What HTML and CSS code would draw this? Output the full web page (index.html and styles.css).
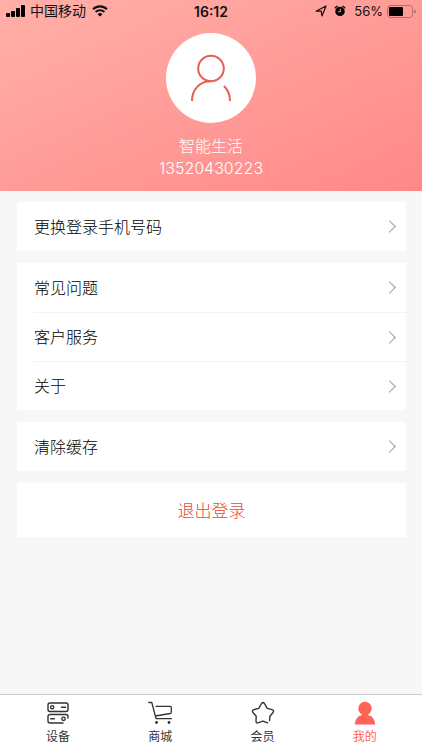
FILE: index.html
```html
<!DOCTYPE html>
<html lang="zh-CN">
<head>
<meta charset="utf-8">
<meta name="viewport" content="width=device-width, initial-scale=1">
<title>我的</title>
<link rel="stylesheet" href="styles.css">
</head>
<body>
<div class="app">
  <header class="hero">
    <div class="status">
      <div class="status-side">
        <svg class="signal" width="20" height="12" viewBox="0 0 20 12" aria-hidden="true"><rect x="0" y="8" width="4" height="4" rx="1"/><rect x="5" y="6" width="4" height="6" rx="1"/><rect x="10" y="3" width="4" height="9" rx="1"/><rect x="15" y="0" width="4" height="12" rx="1"/></svg>
        <span class="carrier">中国移动</span>
        <svg class="wifi" width="16" height="12" viewBox="0 0 16 12" aria-hidden="true"><path d="M1 4.2a10 10 0 0 1 14 0M3.6 7a6.3 6.3 0 0 1 8.8 0" fill="none" stroke="#111" stroke-width="2.1"/><path d="M8 11.6 5.6 9.2a3.4 3.4 0 0 1 4.8 0z"/></svg>
      </div>
      <time class="clock">16:12</time>
      <div class="status-side status-end">
        <svg width="12" height="12" viewBox="0 0 12 12" aria-hidden="true"><path d="M1 6.2 11 1 7 11 6.2 6.2z" fill="none" stroke="#111" stroke-width="1.2" stroke-linejoin="round"/></svg>
        <svg class="alarm" width="12" height="12" viewBox="0 0 12 12" aria-hidden="true"><circle cx="6" cy="6.4" r="4.7"/><path d="M1.300 2.800 3 1.300M10.700 2.800 9 1.300" stroke="#111" stroke-width="1.500" stroke-linecap="round"/><path d="M6.3 3.8v3H4" fill="none" stroke="#ffa19c" stroke-width="1"/></svg>
        <span class="percent">56%</span>
        <svg width="29" height="13" viewBox="0 0 29 13" aria-hidden="true"><rect x=".5" y=".5" width="25" height="12" rx="3" fill="none" stroke="#b06c69"/><rect x="2" y="2" width="14" height="9" rx="1"/><path d="M27 4.5q2 .6 2 2t-2 2z" fill="#b06c69"/></svg>
      </div>
    </div>
    <div class="avatar">
      <svg width="42" height="48" viewBox="0 0 42 48" fill="none" stroke="#e55f54" stroke-width="2" aria-hidden="true"><circle cx="21" cy="14.500" r="12.8"/><path d="M2 47C2 35.500 9.500 27.300 21 27.300M34 32C38 36 40 41 40 47"/></svg>
    </div>
    <h1 class="name">智能生活</h1>
    <p class="phone">13520430223</p>
  </header>

  <main class="content">
    <nav class="card"><a class="row" href="#phone"><span class="label">更换登录手机号码</span><span class="chevron"></span></a></nav>
    <nav class="card">
      <a class="row" href="#faq"><span class="label">常见问题</span><span class="chevron"></span></a>
      <a class="row" href="#service"><span class="label">客户服务</span><span class="chevron"></span></a>
      <a class="row" href="#about"><span class="label">关于</span><span class="chevron"></span></a>
    </nav>
    <nav class="card"><a class="row" href="#cache"><span class="label">清除缓存</span><span class="chevron"></span></a></nav>
    <button class="logout" type="button"><span class="label">退出登录</span></button>
  </main>

  <nav class="tabs">
    <a class="tab" href="#devices">
      <svg width="24" height="24" viewBox="0 0 24 24" fill="none" stroke="#333" stroke-width="1.400" stroke-linecap="round" aria-hidden="true"><rect x="2" y="2" width="20" height="8.500" rx="2"/><circle cx="6.200" cy="6.200" r="1.600"/><path d="M15.500 6.200h4M17 22H4a2 2 0 0 1-2-2v-4.500a2 2 0 0 1 2-2h16a2 2 0 0 1 2 2V17M4.800 17.800h3.500"/><circle cx="17.500" cy="17.800" r="1.700"/></svg>
      设备
    </a>
    <a class="tab" href="#mall">
      <svg width="24" height="24" viewBox="0 0 24 24" fill="none" stroke="#333" stroke-width="1.300" stroke-linecap="round" stroke-linejoin="round" aria-hidden="true"><path d="M.8 1.500h3L8 17.700h15.300M8 5.300h14.300q1 0 1 1v5q0 1-1 1.200L7.300 15"/><circle cx="8.500" cy="21.500" r=".8" fill="#333"/><circle cx="21" cy="21.500" r=".8" fill="#333"/></svg>
      商城
    </a>
    <a class="tab" href="#member">
      <svg width="24" height="24" viewBox="0 0 24 24" fill="none" stroke="#333" stroke-width="1.400" stroke-linecap="round" stroke-linejoin="round" aria-hidden="true"><path d="M18.600 19.500 18.800 15.500 22 11.500Q23.500 9.300 21 8.600L16.300 7.300 13.400 2.500Q12 .6 10.600 2.500L7.700 7.300 3 8.600Q.5 9.300 2 11.500L5.200 15.300 5 20Q5 22.600 7.500 21.700L12 20.200 16.500 21.900"/></svg>
      会员
    </a>
    <a class="tab active" href="#me" aria-current="page">
      <svg width="24" height="24" viewBox="0 0 24 24" fill="#ff6257" aria-hidden="true"><circle cx="12" cy="7.500" r="6.700"/><path d="M1.800 23.500C2 18.500 5 14.800 9 14v-2h6v2c4 .8 7 4.500 7.200 9.500z"/></svg>
      我的
    </a>
  </nav>
</div>
</body>
</html>
```

FILE: styles.css
```css
* { box-sizing: border-box; }

body {
  margin: 0;
  background: #f7f7f7;
  color: #000;
  font-family: Inter, "Noto Sans CJK SC", sans-serif;
  font-size: 16px;
  font-weight: 300;
}

a { color: inherit; text-decoration: none; }
svg { display: block; flex: none; }

.app {
  display: flex;
  flex-direction: column;
  min-height: 100vh;
}

.hero {
  display: flex;
  flex-direction: column;
  align-items: center;
  padding-bottom: 12px;
  background: linear-gradient(to bottom right, #ffb0a8, #ff8888);
  color: #fff;
}

.status {
  display: flex;
  align-items: center;
  align-self: stretch;
  height: 22px;
  padding: 0 6px;
  color: #111;
  font-size: 13px;
  font-weight: 400;
}

.status-side {
  display: flex;
  flex: 1;
  align-items: center;
  gap: 4px;
}

.status-end { justify-content: flex-end; }
.carrier { padding-bottom: 2px; font-size: 14px; }
.wifi { margin-left: 2px; }
.alarm { margin: 0 4px 0 3px; }
.clock { font-size: 14px; font-weight: 600; }

.avatar {
  display: flex;
  align-items: center;
  justify-content: center;
  width: 90px;
  height: 90px;
  margin-top: 11px;
  border-radius: 50%;
  background: #fff;
}

.name {
  margin: 11px 0 0;
  font-size: 16px;
  font-weight: 300;
  line-height: 24px;
}

.phone {
  margin: 0;
  font-size: 16px;
  line-height: 21px;
}

.content {
  display: flex;
  flex: 1;
  flex-direction: column;
  gap: 12px;
  padding: 11px 16px 11px 17px;
}

.card { padding-left: 17px; background: #fff; }

.row {
  display: flex;
  align-items: center;
  justify-content: space-between;
  height: 49px;
  padding-right: 12px;
}

.row + .row { border-top: 1px solid #f3f3f3; }

.label { padding-bottom: 2px; }

.chevron {
  width: 9px;
  height: 9px;
  border: solid #999;
  border-width: 1px 1px 0 0;
  transform: rotate(45deg);
}

.logout {
  display: flex;
  align-items: center;
  justify-content: center;
  height: 54px;
  border: 0;
  background: #fff;
  color: #ec4436;
  font: inherit;
  font-size: 17px;
}

.tabs {
  display: grid;
  grid-template-columns: repeat(4, 1fr);
  padding: 0 6px 0 7px;
  border-top: 1px solid #c8c8c8;
  background: #fff;
}

.tab {
  display: flex;
  flex-direction: column;
  align-items: center;
  height: 55px;
  padding-top: 6px;
  font-size: 12px;
  font-weight: 400;
  line-height: 24px;
  color: #333;
}

.tab.active { color: #ff6257; }
```
